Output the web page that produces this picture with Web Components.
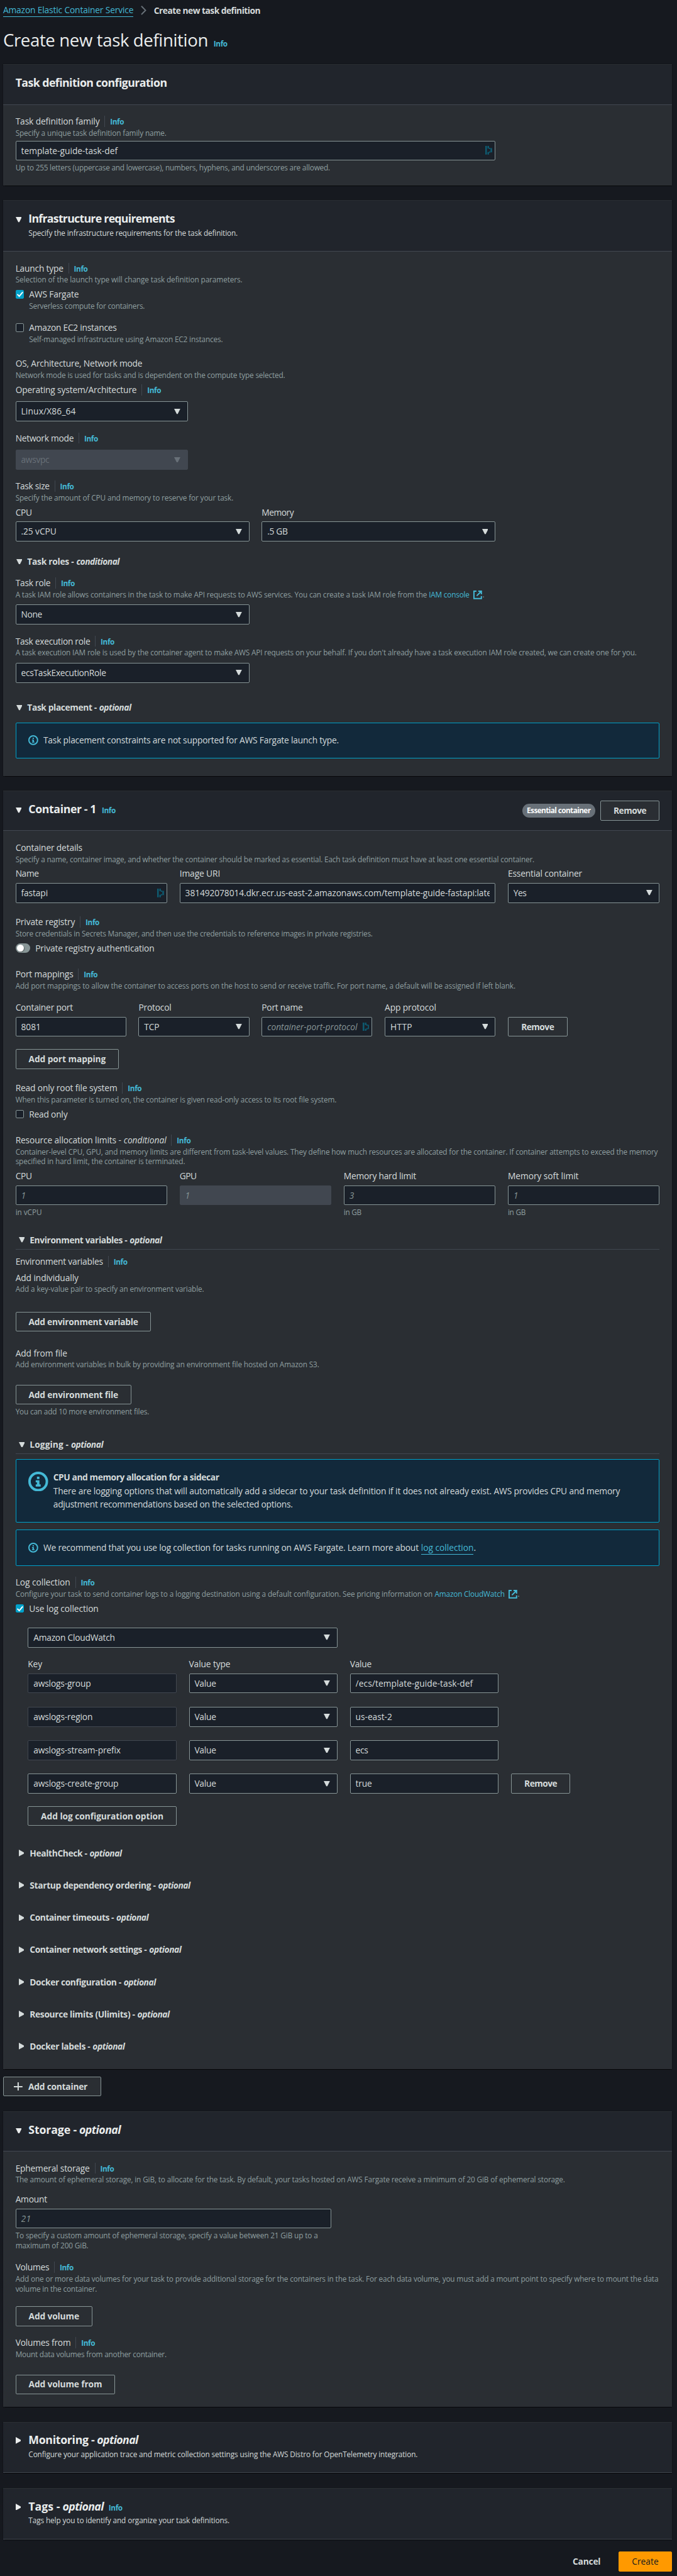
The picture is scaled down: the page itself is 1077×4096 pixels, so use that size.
<!DOCTYPE html>
<html lang="en">
<head>
<meta charset="utf-8">
<title>Create new task definition</title>
<style>
html{background:#16191f;overflow:hidden}
body{margin:0;zoom:.98533;width:1093px;height:4157px;background:#16191f;color:#d5dbdb;font-family:"Open Sans","Noto Sans",sans-serif;font-size:14px;line-height:22px;overflow:hidden}
main{display:flow-root;padding:0 8px 0 5px}
.row{display:flex}
.base{align-items:baseline}
.g20{gap:20px}
.end{justify-content:flex-end;align-items:center}
.q4{display:grid;grid-template-columns:repeat(4,245px);gap:20px}
.logs{display:grid;grid-template-columns:repeat(3,240px) auto;column-gap:20px;row-gap:22px;justify-content:start;margin-left:20px}
.link{color:#44b9d6}
</style>
</head>
<body>
<main>
  <div class="row" style="padding-top:6px;align-items:center">
    <t-x w="210.7" class="link" style="border-bottom:1px solid #44b9d6;line-height:20px;margin-bottom:1px">Amazon Elastic Container Service</t-x>
    <svg width="9" height="15" viewBox="0 0 9 15" style="margin:0 12px;" fill="none" stroke="#687078" stroke-width="2"><path d="M1 .8 7.6 7.5 1 14.2"/></svg>
    <t-x k="b" w="172">Create new task definition</t-x>
  </div>
  <div class="row base" style="margin-top:18.5px;height:57.5px"><t-x k="h1" w="331">Create new task definition</t-x><ui-info style="margin-left:9px"></ui-info></div>

  <ui-card h="65" total="195">
    <t-x slot="head" k="h2" w="244.7">Task definition configuration</t-x>
    <ui-label w="136" info>Task definition family</ui-label>
    <t-x k="d" w="244">Specify a unique task definition family name.</t-x>
    <ui-field g="4" width="775" mark w="156">template-guide-task-def</ui-field>
    <t-x k="d" g="4" w="508.2">Up to 255 letters (uppercase and lowercase), numbers, hyphens, and underscores are allowed.</t-x>
  </ui-card>

  <ui-card g="24" h="83" total="929" arrow="down">
    <t-x slot="head" k="h2" w="236.3">Infrastructure requirements</t-x>
    <t-x slot="sub" k="d" w="338" style="color:#d5dbdb">Specify the infrastructure requirements for the task definition.</t-x>
    <ui-label w="77.4" info>Launch type</ui-label>
    <t-x k="d" w="366.7">Selection of the launch type will change task definition parameters.</t-x>
    <ui-check g="4" checked w="80.2">AWS Fargate</ui-check>
    <t-x k="d" w="186.8" style="margin-left:22px">Serverless compute for containers.</t-x>
    <ui-check g="16" w="141.5">Amazon EC2 instances</ui-check>
    <t-x k="d" w="313" style="margin-left:22px">Self-managed infrastructure using Amazon EC2 instances.</t-x>
    <ui-label g="20" w="205">OS, Architecture, Network mode</ui-label>
    <t-x k="d" w="435.7">Network mode is used for tasks and is dependent on the compute type selected.</t-x>
    <ui-label g="4" w="195.9" info>Operating system/Architecture</ui-label>
    <ui-field g="8" width="278" select w="88.5">Linux/X86_64</ui-field>
    <ui-label g="16" w="94.1" info>Network mode</ui-label>
    <ui-field g="8" width="278" select disabled w="45.5">awsvpc</ui-field>
    <ui-label g="16" w="55" info>Task size</ui-label>
    <t-x k="d" w="352">Specify the amount of CPU and memory to reserve for your task.</t-x>
    <div class="row g20" style="margin-top:4px">
      <div><ui-label w="26.5">CPU</ui-label><ui-field g="4" width="377.5" select w="57">.25 vCPU</ui-field></div>
      <div><ui-label w="51.6">Memory</ui-label><ui-field g="4" width="377.5" select w="33">.5 GB</ui-field></div>
    </div>
    <ui-expand g="21" arrow="down" inset="1" w="75.3" iw="69.7" note="conditional">Task roles -</ui-expand>
    <ui-label g="13" w="56.5" info>Task role</ui-label>
    <div class="row base" style="height:16px"><t-x k="d" w="665">A task IAM role allows containers in the task to make API requests to AWS services. You can create a task IAM role from the</t-x><t-x k="d" w="65.5" class="link" style="margin-left:3px">IAM console</t-x><ui-ext></ui-ext><t-x k="d">.</t-x></div>
    <ui-field g="8" width="377.5" select w="34">None</ui-field>
    <ui-label g="16" w="120.6" info>Task execution role</ui-label>
    <t-x k="d" w="1003.8">A task execution IAM role is used by the container agent to make AWS API requests on your behalf. If you don't already have a task execution IAM role created, we can create one for you.</t-x>
    <ui-field g="8" width="377.5" select w="137.3">ecsTaskExecutionRole</ui-field>
    <ui-expand g="29" arrow="down" inset="1" w="112.2" iw="51.6" note="optional">Task placement -</ui-expand>
    <ui-alert g="13"><t-x w="477.5">Task placement constraints are not supported for AWS Fargate launch type.</t-x></ui-alert>
  </ui-card>

  <ui-card g="24" h="65" total="2063" arrow="down">
    <t-x slot="head" k="h2" w="109.5">Container - 1</t-x>
    <ui-info slot="head" style="margin-left:9px"></ui-info>
    <ui-badge slot="actions" w="103">Essential container</ui-badge>
    <ui-button slot="actions" width="96" w="53">Remove</ui-button>
    <ui-label w="108">Container details</ui-label>
    <t-x k="d" w="838.5">Specify a name, container image, and whether the container should be marked as essential. Each task definition must have at least one essential container.</t-x>
    <div class="row g20" style="margin-top:4px">
      <div><ui-label w="37.6">Name</ui-label><ui-field g="4" width="245" mark w="43.2">fastapi</ui-field></div>
      <div><ui-label w="65.5">Image URI</ui-label><ui-field g="4" width="510" w="495">381492078014.dkr.ecr.us-east-2.amazonaws.com/template-guide-fastapi:late</ui-field></div>
      <div><ui-label w="119.9">Essential container</ui-label><ui-field g="4" width="245" select w="21">Yes</ui-field></div>
    </div>
    <ui-label g="20" w="96.2" info>Private registry</ui-label>
    <t-x k="d" w="577.2">Store credentials in Secrets Manager, and then use the credentials to reference images in private registries.</t-x>
    <ui-toggle g="4" w="192.4">Private registry authentication</ui-toggle>
    <ui-label g="20" w="93.4" info>Port mappings</ui-label>
    <t-x k="d" w="808">Add port mappings to allow the container to access ports on the host to send or receive traffic. For port name, a default will be assigned if left blank.</t-x>
    <div class="row g20" style="margin-top:16px;align-items:flex-end">
      <div><ui-label w="92.7">Container port</ui-label><ui-field g="4" width="178.75" w="32">8081</ui-field></div>
      <div><ui-label w="53">Protocol</ui-label><ui-field g="4" width="178.75" select w="24.4">TCP</ui-field></div>
      <div><ui-label w="66.2">Port name</ui-label><ui-field g="4" width="178.75" mark hint w="145.7">container-port-protocol</ui-field></div>
      <div><ui-label w="83">App protocol</ui-label><ui-field g="4" width="178.75" select w="35.5">HTTP</ui-field></div>
      <ui-button width="96" w="53">Remove</ui-button>
    </div>
    <ui-button g="20" width="167" w="124.8">Add port mapping</ui-button>
    <ui-label g="20" w="164.5" info>Read only root file system</ui-label>
    <t-x k="d" w="518.6">When this parameter is turned on, the container is given read-only access to its root file system.</t-x>
    <ui-check g="4" w="62">Read only</ui-check>
    <ui-label g="20" w="170.8" note="conditional" iw="69" info>Resource allocation limits -</ui-label>
    <t-x k="d" w="1038">Container-level CPU, GPU, and memory limits are different from task-level values. They define how much resources are allocated for the container. If container attempts to exceed the memory</t-x>
    <t-x k="d" w="274">specified in hard limit, the container is terminated.</t-x>
    <div class="q4" style="margin-top:4px">
      <div><ui-label w="26.5">CPU</ui-label><ui-field g="4" width="245" hint>1</ui-field><t-x g="4" k="d" w="42.5">in vCPU</t-x></div>
      <div><ui-label w="27.2">GPU</ui-label><ui-field g="4" width="245" hint disabled>1</ui-field></div>
      <div><ui-label w="117">Memory hard limit</ui-label><ui-field g="4" width="245" hint>3</ui-field><t-x g="4" k="d" w="28.6">in GB</t-x></div>
      <div><ui-label w="114.3">Memory soft limit</ui-label><ui-field g="4" width="245" hint>1</ui-field><t-x g="4" k="d" w="28.6">in GB</t-x></div>
    </div>
    <ui-expand g="25" arrow="down" rule inset="5" w="157.5" iw="52" note="optional">Environment variables -</ui-expand>
    <ui-label g="8" w="141.5" info>Environment variables</ui-label>
    <ui-label g="4" w="101.8">Add individually</ui-label>
    <t-x k="d" w="304.6">Add a key-value pair to specify an environment variable.</t-x>
    <ui-button g="28" width="219" w="177">Add environment variable</ui-button>
    <ui-label g="24" w="83.6">Add from file</ui-label>
    <t-x k="d" w="490.7">Add environment variables in bulk by providing an environment file hosted on Amazon S3.</t-x>
    <ui-button g="24" width="187" w="145">Add environment file</ui-button>
    <t-x k="d" g="4" w="216">You can add 10 more environment files.</t-x>
    <ui-expand g="33" arrow="down" rule inset="5" w="62.7" iw="52" note="optional">Logging -</ui-expand>
    <ui-alert g="8" big><t-x k="b" w="268">CPU and memory allocation for a sidecar</t-x><t-x w="916">There are logging options that will automatically add a sidecar to your task definition if it does not already exist. AWS provides CPU and memory</t-x><t-x w="387">adjustment recommendations based on the selected options.</t-x></ui-alert>
    <ui-alert g="12"><div class="row"><t-x w="606.4">We recommend that you use log collection for tasks running on AWS Fargate. Learn more about</t-x><t-x w="85" class="link" style="margin-left:4px;line-height:20px;border-bottom:1px solid #44b9d6;padding-top:1px;box-sizing:border-box;height:22px">log collection</t-x><t-x>.</t-x></div></ui-alert>
    <ui-label g="16" w="88.5" info>Log collection</ui-label>
    <div class="row base" style="height:16px"><t-x k="d" w="674">Configure your task to send container logs to a logging destination using a default configuration. See pricing information on</t-x><t-x k="d" w="113" class="link" style="margin-left:3.5px">Amazon CloudWatch</t-x><ui-ext></ui-ext><t-x k="d">.</t-x></div>
    <ui-check g="4" checked w="112.2">Use log collection</ui-check>
    <ui-field g="20" width="500" select w="131.7" style="margin-left:20px">Amazon CloudWatch</ui-field>
    <div class="logs" style="margin-top:16px;row-gap:0"><ui-label w="23">Key</ui-label><ui-label w="67">Value type</ui-label><ui-label w="35">Value</ui-label></div>
    <div class="logs" style="margin-top:4px">
      <ui-field readonly w="92.7">awslogs-group</ui-field><ui-field select w="35">Value</ui-field><ui-field w="189.6">/ecs/template-guide-task-def</ui-field><span></span>
      <ui-field readonly w="95.5">awslogs-region</ui-field><ui-field select w="35">Value</ui-field><ui-field w="59.2">us-east-2</ui-field><span></span>
      <ui-field readonly w="140.8">awslogs-stream-prefix</ui-field><ui-field select w="35">Value</ui-field><ui-field w="20.2">ecs</ui-field><span></span>
      <ui-field w="137.3">awslogs-create-group</ui-field><ui-field select w="35">Value</ui-field><ui-field w="26.5">true</ui-field><ui-button width="96" w="53">Remove</ui-button>
    </div>
    <ui-button g="20" width="240" w="198" style="margin-left:20px">Add log configuration option</ui-button>
    <ui-expand g="33" arrow="right" inset="5" w="92.7" iw="52" note="optional">HealthCheck -</ui-expand>
    <ui-expand g="30" arrow="right" inset="5" w="203.5" iw="52" note="optional">Startup dependency ordering -</ui-expand>
    <ui-expand g="30" arrow="right" inset="5" w="136" iw="52" note="optional">Container timeouts -</ui-expand>
    <ui-expand g="30" arrow="right" inset="5" w="189" iw="52" note="optional">Container network settings -</ui-expand>
    <ui-expand g="30" arrow="right" inset="5" w="147.8" iw="52" note="optional">Docker configuration -</ui-expand>
    <ui-expand g="30" arrow="right" inset="5" w="170" iw="52" note="optional">Resource limits (Ulimits) -</ui-expand>
    <ui-expand g="30" arrow="right" inset="5" w="97.6" iw="52" note="optional">Docker labels -</ui-expand>
  </ui-card>

  <ui-button g="12" width="158" plus w="95.5">Add container</ui-button>

  <ui-card g="24" h="65" total="477" arrow="down">
    <t-x slot="head" k="h2" w="78">Storage -</t-x><t-x slot="head" k="h2i" w="67" style="margin-left:4px">optional</t-x>
    <ui-label w="119.9" info>Ephemeral storage</ui-label>
    <t-x k="d" w="888">The amount of ephemeral storage, in GiB, to allocate for the task. By default, your tasks hosted on AWS Fargate receive a minimum of 20 GiB of ephemeral storage.</t-x>
    <ui-label g="12" w="51">Amount</ui-label>
    <ui-field g="4" width="510" hint w="16">21</ui-field>
    <t-x k="d" g="4" w="488.6">To specify a custom amount of ephemeral storage, specify a value between 21 GiB up to a</t-x>
    <t-x k="d" w="117.8">maximum of 200 GiB.</t-x>
    <ui-label g="16" w="54.4" info>Volumes</ui-label>
    <t-x k="d" w="1039">Add one or more data volumes for your task to provide additional storage for the containers in the task. For each data volume, you must add a mount point to specify where to mount the data</t-x>
    <t-x k="d" w="131.7">volume in the container.</t-x>
    <ui-button g="20" width="124" w="81.6">Add volume</ui-button>
    <ui-label g="16" w="89.2" info>Volumes from</ui-label>
    <t-x k="d" w="244">Mount data volumes from another container.</t-x>
    <ui-button g="24" width="161" w="118.5">Add volume from</ui-button>
  </ui-card>

  <ui-card g="24" h="83" total="83" arrow="right">
    <t-x slot="head" k="h2" w="106.7">Monitoring -</t-x><t-x slot="head" k="h2i" w="66.5" style="margin-left:4px">optional</t-x>
    <t-x slot="sub" k="d" w="628.8" style="color:#d5dbdb">Configure your application trace and metric collection settings using the AWS Distro for OpenTelemetry integration.</t-x>
  </ui-card>
  <ui-card g="24" h="83" total="83" arrow="right">
    <t-x slot="head" k="h2" w="51">Tags -</t-x><t-x slot="head" k="h2i" w="66.5" style="margin-left:4px">optional</t-x><ui-info slot="head" style="margin-left:8px"></ui-info>
    <t-x slot="sub" k="d" w="324.8" style="color:#d5dbdb">Tags help you to identify and organize your task definitions.</t-x>
  </ui-card>

  <div class="row end" style="margin-top:20px">
    <t-x k="b" w="45" style="margin-right:29px">Cancel</t-x>
    <ui-button width="86.5" primary w="43.2">Create</ui-button>
  </div>
</main>
<script>
const FAMILY = '"Open Sans","Noto Sans",sans-serif';
const KINDS = {
  n:  {size:14, lh:22, weight:400},
  i:  {size:14, lh:22, weight:400, italic:1},
  b:  {size:14, lh:22, weight:700},
  bi: {size:14, lh:22, weight:700, italic:1},
  d:  {size:12, lh:16, weight:400, color:'#8f9fa0'},
  s:  {size:12, lh:16, weight:700},
  h1: {size:28, lh:36, weight:400, color:'#eaeded'},
  h2: {size:18, lh:22, weight:700, color:'#eaeded'},
  h2i:{size:18, lh:22, weight:700, italic:1, color:'#eaeded'}
};
const ruler = document.createElement('canvas').getContext('2d');

class Base extends HTMLElement {
  connectedCallback() {
    if (this.shadowRoot) return;
    if (this.hasAttribute('g')) this.style.marginTop = this.getAttribute('g') + 'px';
    this.attachShadow({mode:'open'}).innerHTML = this.render();
  }
  a(n, d = '') { return this.getAttribute(n) ?? d; }
  h(n) { return this.hasAttribute(n); }
}
const spacing = (text, kind, width) => {
  if (!width) return 0;
  const k = KINDS[kind];
  ruler.font = `${k.italic ? 'italic ' : ''}${k.weight} ${k.size}px ${FAMILY}`;
  return (width - ruler.measureText(text).width) / text.length;
};
const typeCss = (kind, text, width) => {
  const k = KINDS[kind];
  return `font:${k.italic ? 'italic ' : ''}${k.weight} ${k.size}px/${k.lh}px ${FAMILY};white-space:nowrap;letter-spacing:${spacing(text, kind, +width).toFixed(3)}px;`;
};

customElements.define('t-x', class extends Base {
  render() {
    const kind = this.a('k', 'n'), c = KINDS[kind].color;
    return `<style>:host{display:block;width:fit-content;${typeCss(kind, this.textContent, this.a('w'))}${c && !this.classList.contains('link') ? 'color:' + c : ''}}</style><slot></slot>`;
  }
});
customElements.define('ui-info', class extends Base {
  render() { return `<style>:host{display:block;color:#44b9d6;${typeCss('s', 'Info', 22.3)}}</style>Info`; }
});
customElements.define('ui-ext', class extends Base {
  render() { return `<style>:host{display:block;align-self:center;margin-left:5px;height:16px}svg{display:block}</style><svg width="16" height="16" viewBox="0 0 16 16" fill="none" stroke="#44b9d6" stroke-width="2"><path d="M6 2H2v12h12V10M9 2H14v5M14 2 6.5 9.5"/></svg>`; }
});
customElements.define('ui-label', class extends Base {
  render() {
    return `<style>:host{display:flex;height:22px;align-items:baseline;${typeCss('n', this.textContent, this.a('w'))}}
      i{margin-left:4px;${typeCss('i', this.a('note'), this.a('iw'))}}
      b{align-self:flex-start;width:1px;height:18px;margin:2px 8px 0;background:#414750}</style>
      <span><slot></slot></span>${this.h('note') ? `<i>${this.a('note')}</i>` : ''}${this.h('info') ? '<b></b><ui-info></ui-info>' : ''}`;
  }
});
const DOWN = c => `<svg width="10" height="9" viewBox="0 0 10 9" fill="${c}"><path d="M0 0H10L5.8 8.4H4.2Z"/></svg>`;
const RIGHT = c => `<svg width="9" height="11" viewBox="0 0 9 11" fill="${c}"><path d="M0 0 8.5 4.7V6.3L0 11Z"/></svg>`;

customElements.define('ui-field', class extends Base {
  render() {
    const dis = this.h('disabled'), kind = this.h('hint') ? 'i' : 'n';
    const line = dis || this.h('readonly') ? '#414750' : '#879596';
    const color = this.h('hint') ? '#879596' : dis ? '#687078' : '#d5dbdb';
    const width = this.a('width');
    return `<style>:host{display:flex;box-sizing:border-box;${width ? `width:${width}px;` : ''}height:32px;border:1px solid ${line};border-radius:2px;background:${dis ? '#414750' : '#1a2029'};color:${color};padding:0 ${this.h('mark') ? 4 : 8}px 0 8px;align-items:center;overflow:hidden;${typeCss(kind, this.textContent, this.a('w'))}}
      span{flex:1;min-width:0;overflow:hidden}svg{flex:none;margin-right:3px}.m{margin:0}</style>
      <span><slot></slot></span>${this.h('select') ? DOWN(dis ? '#687078' : '#d5dbdb') : ''}
      ${this.h('mark') ? '<svg class="m" width="11" height="14" viewBox="0 0 11 14" fill="#0e5a70"><path d="M0 0H2.6V14H0ZM3.6 0H6V4H3.6ZM3.6 10H6V14H3.6ZM6 3H8V5H6ZM6 9H8V11H6ZM8.4 3.5H11V10.5H8.4Z"/></svg>' : ''}`;
  }
});
customElements.define('ui-button', class extends Base {
  render() {
    const p = this.h('primary'), plus = this.h('plus');
    const bg = p ? '#ff9900' : '#2a2e33';
    return `<style>:host{display:flex;box-sizing:border-box;width:${this.a('width')}px;height:32px;border:1px solid ${p ? bg : '#879596'};border-radius:2px;background:${bg};color:${p ? '#16191f' : '#d5dbdb'};align-items:center;justify-content:center;${typeCss(p ? 'n' : 'b', this.textContent, this.a('w'))}}
      svg{margin:0 9px 0 -4px}</style>${plus ? '<svg width="14" height="14" viewBox="0 0 14 14" stroke="#d5dbdb" stroke-width="2"><path d="M7 0V14M0 7H14"/></svg>' : ''}<slot></slot>`;
  }
});
customElements.define('ui-badge', class extends Base {
  render() { return `<style>:host{display:flex;box-sizing:border-box;width:118px;height:22px;border-radius:11px;background:#687078;color:#fafafa;align-items:center;justify-content:center;${typeCss('s', this.textContent, this.a('w'))}}</style><slot></slot>`; }
});
customElements.define('ui-check', class extends Base {
  render() {
    const on = this.h('checked');
    return `<style>:host{display:flex;height:22px;align-items:center;gap:8px;${typeCss('n', this.textContent, this.a('w'))}}
      b{box-sizing:border-box;width:14px;height:14px;border:1px solid ${on ? '#00a1c9' : '#879596'};border-radius:2px;background:${on ? '#00a1c9' : '#1a2029'};display:flex}svg{display:block}</style>
      <b>${on ? '<svg width="12" height="12" viewBox="0 0 12 12" fill="none" stroke="#fff" stroke-width="2"><path d="M1.5 6 4.7 9.2 10.4 2.4"/></svg>' : ''}</b><slot></slot>`;
  }
});
customElements.define('ui-toggle', class extends Base {
  render() {
    return `<style>:host{display:flex;height:22px;align-items:center;gap:8px;${typeCss('n', this.textContent, this.a('w'))}}
      b{box-sizing:border-box;width:24px;height:16px;border-radius:8px;background:#879596;padding:2px;display:flex}
      i{width:12px;height:12px;border-radius:50%;background:#fff;box-shadow:1px 1px 1px rgba(0,0,0,.35)}</style><b><i></i></b><slot></slot>`;
  }
});
customElements.define('ui-expand', class extends Base {
  render() {
    const down = this.a('arrow') === 'down';
    return `<style>:host{display:flex;box-sizing:border-box;height:${this.h('rule') ? 27 : 22}px;padding-left:${this.a('inset')}px;${this.h('rule') ? 'border-bottom:1px solid #414750;' : ''}${typeCss('b', this.textContent, this.a('w'))}}
      i{margin-left:4px;${typeCss('bi', this.a('note'), this.a('iw'))}}
      svg{margin:${down ? '7px 8px 0 0' : '5.5px 9px 0 0'}}</style>${(down ? DOWN : RIGHT)('#d5dbdb')}<span><slot></slot></span><i>${this.a('note')}</i>`;
  }
});
customElements.define('ui-alert', class extends Base {
  render() {
    const s = this.h('big') ? 32 : 16;
    return `<style>:host{display:flex;box-sizing:border-box;height:${this.h('big') ? 102 : 58}px;border:1px solid #00a1c9;border-radius:2px;background:#12293b;padding:17px 20px;gap:8px}
      svg{flex:none;margin-top:${this.h('big') ? 2 : 3}px}</style>
      <svg width="${s}" height="${s}" viewBox="0 0 16 16"><circle cx="8" cy="8" r="7" fill="none" stroke="#44b9d6" stroke-width="2"/><path fill="#44b9d6" d="M7 4H9V6H7ZM6 7H9V10.3H10V12H6V10.3H7V8.6H6Z"/></svg><div><slot></slot></div>`;
  }
});
customElements.define('ui-card', class extends Base {
  render() {
    const arrow = this.a('arrow');
    return `<style>:host{display:block;box-sizing:border-box;height:${this.a('total')}px;background:#2a2e33;box-shadow:0 1px 1px rgba(0,0,0,.6),0 0 1px #0b0d10}
      header{display:flex;box-sizing:border-box;height:${this.a('h')}px;padding:18px 20px 0;border-top:1px solid #2a2e33;border-bottom:1px solid #414750;background:#21252c}
      .caret{width:21px}.caret svg{display:block;margin-top:${arrow === 'down' ? 8 : 6}px}
      .mid{flex:1}.head{display:flex;align-items:baseline;height:22px}.sub{margin-top:4px}
      .act{display:flex;gap:8px;align-items:center;height:32px;margin-top:-3px}
      section{padding:16px 20px 0}</style>
      <header>${arrow ? `<div class="caret">${(arrow === 'down' ? DOWN : RIGHT)('#eaeded')}</div>` : ''}
        <div class="mid"><div class="head"><slot name="head"></slot></div><div class="sub"><slot name="sub"></slot></div></div>
        <div class="act"><slot name="actions"></slot></div></header>
      <section><slot></slot></section>`;
  }
});
</script>
</body>
</html>
